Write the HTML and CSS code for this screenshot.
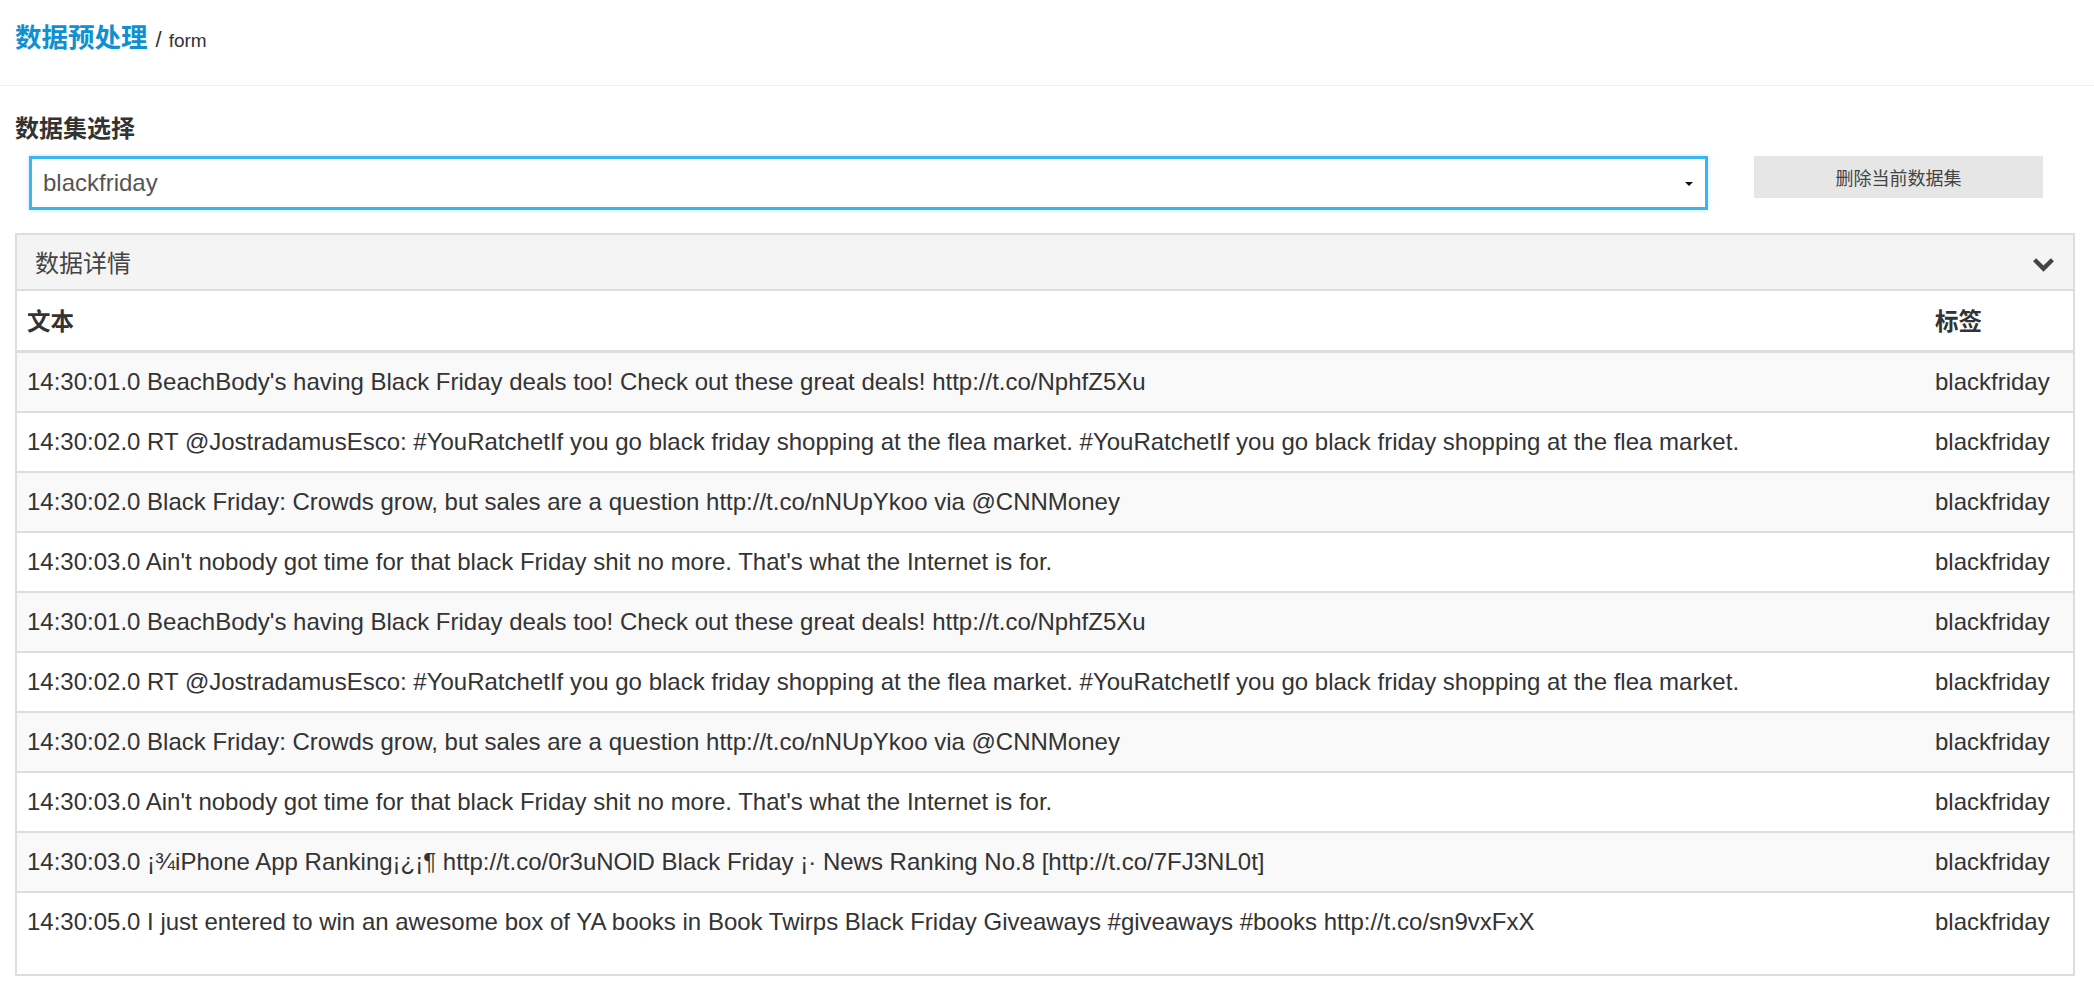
FILE: index.html
```html
<!DOCTYPE html>
<html lang="zh-CN">
<head>
<meta charset="utf-8">
<title>数据预处理</title>
<link rel="stylesheet" href="styles.css">
</head>
<body>
<header class="topbar">
  <strong class="crumb-main">数据预处理</strong><span class="crumb-sep">/</span><small class="crumb-sub">form</small>
</header>
<main class="content">
  <div class="form-label">数据集选择</div>
  <div class="select-row">
    <div class="select-box"><span class="select-value">blackfriday</span><span class="caret"></span></div>
    <button class="btn-delete" type="button">删除当前数据集</button>
  </div>
  <section class="panel">
    <div class="panel-hd">
      <span class="panel-title">数据详情</span>
      <svg class="chevron" width="23" height="15" viewBox="0 0 23 15" aria-hidden="true"><polyline points="2.6,2.8 11.5,11.6 20.4,2.8" fill="none" stroke="#444" stroke-width="4.4" stroke-linejoin="miter"/></svg>
    </div>
    <table class="data-table">
      <thead>
        <tr><th class="col-text">文本</th><th class="col-tag">标签</th></tr>
      </thead>
      <tbody>
        <tr><td>14:30:01.0 BeachBody's having Black Friday deals too! Check out these great deals! http://t.co/NphfZ5Xu</td><td>blackfriday</td></tr>
        <tr><td>14:30:02.0 RT @JostradamusEsco: #YouRatchetIf you go black friday shopping at the flea market. #YouRatchetIf you go black friday shopping at the flea market.</td><td>blackfriday</td></tr>
        <tr><td>14:30:02.0 Black Friday: Crowds grow, but sales are a question http://t.co/nNUpYkoo via @CNNMoney</td><td>blackfriday</td></tr>
        <tr><td>14:30:03.0 Ain't nobody got time for that black Friday shit no more. That's what the Internet is for.</td><td>blackfriday</td></tr>
        <tr><td>14:30:01.0 BeachBody's having Black Friday deals too! Check out these great deals! http://t.co/NphfZ5Xu</td><td>blackfriday</td></tr>
        <tr><td>14:30:02.0 RT @JostradamusEsco: #YouRatchetIf you go black friday shopping at the flea market. #YouRatchetIf you go black friday shopping at the flea market.</td><td>blackfriday</td></tr>
        <tr><td>14:30:02.0 Black Friday: Crowds grow, but sales are a question http://t.co/nNUpYkoo via @CNNMoney</td><td>blackfriday</td></tr>
        <tr><td>14:30:03.0 Ain't nobody got time for that black Friday shit no more. That's what the Internet is for.</td><td>blackfriday</td></tr>
        <tr><td>14:30:03.0 ¡¾iPhone App Ranking¡¿¡¶ http://t.co/0r3uNOlD Black Friday ¡· News Ranking No.8 [http://t.co/7FJ3NL0t]</td><td>blackfriday</td></tr>
        <tr><td>14:30:05.0 I just entered to win an awesome box of YA books in Book Twirps Black Friday Giveaways #giveaways #books http://t.co/sn9vxFxX</td><td>blackfriday</td></tr>
      </tbody>
    </table>
  </section>
</main>
</body>
</html>
```
FILE: styles.css
```css
* { box-sizing: border-box; }
body {
  margin: 0;
  font-family: "Liberation Sans", "Noto Sans CJK SC", sans-serif;
  color: #333;
  background: #fff;
}
.topbar {
  height: 86px;
  border-bottom: 1px solid #eee;
  padding: 11px 15px 0;
  display: flex;
  align-items: baseline;
  line-height: 50px;
}
.crumb-main {
  font-family: "Noto Sans CJK SC", sans-serif;
  color: #0e90d2;
  font-size: 26.5px;
  font-weight: bold;
}
.crumb-sep {
  font-size: 22px;
  color: #333;
  margin: 0 7px 0 8px;
}
.crumb-sub { font-size: 19px; color: #333; }

.content { padding: 0 19px 0 15px; }
.form-label {
  margin-top: 23px;
  font-family: "Noto Sans CJK SC", sans-serif;
  font-weight: bold;
  font-size: 24px;
  line-height: 36px;
  color: #333;
}
.select-row {
  display: flex;
  align-items: flex-start;
  margin-top: 11px;
}
.select-box {
  margin-left: 14px;
  width: 1679px;
  height: 54px;
  border: 3px solid #3bb4f2;
  box-shadow: 0 0 5px rgba(59, 180, 242, 0.35);
  display: flex;
  align-items: center;
  justify-content: space-between;
  padding: 0 12px 0 11px;
  font-size: 24px;
  color: #555;
}
.caret {
  width: 0;
  height: 0;
  border-left: 4px solid transparent;
  border-right: 4px solid transparent;
  border-top: 4px solid #111;
  margin-top: 2px;
}
.btn-delete {
  margin-left: 46px;
  width: 289px;
  height: 42px;
  background: #e6e6e6;
  border: none;
  font-family: "Noto Sans CJK SC", sans-serif;
  font-size: 18px;
  color: #444;
  padding: 0;
}
.panel {
  margin-top: 23px;
  border: 2px solid #ddd;
}
.panel-hd {
  height: 56px;
  background: #f4f4f4;
  border-bottom: 2px solid #ddd;
  display: flex;
  align-items: center;
  justify-content: space-between;
  padding: 0 18px 0 18px;
}
.panel-title {
  font-family: "Noto Sans CJK SC", sans-serif;
  font-size: 24px;
  color: #444;
  margin-top: -1px;
}
.chevron { display: block; margin-top: 4px; }

.data-table {
  width: 100%;
  border-collapse: separate;
  border-spacing: 0;
  margin-bottom: 23px;
  font-size: 24px;
  color: #333;
}
.data-table th {
  text-align: left;
  font-family: "Noto Sans CJK SC", sans-serif;
  font-weight: bold;
  font-size: 23.5px;
  line-height: 59px;
  padding: 0 10px;
  border-bottom: 3px solid #ddd;
  background: #fff;
}
.data-table th.col-tag { width: 148px; }
.data-table td {
  line-height: 58px;
  padding: 0 10px;
  border-top: 2px solid #ddd;
  white-space: nowrap;
}
.data-table tbody tr:first-child td { border-top: 0; }
.data-table tbody tr:nth-child(odd) td { background: #f9f9f9; }
.data-table tbody tr:nth-child(even) td { background: #fff; }
```
